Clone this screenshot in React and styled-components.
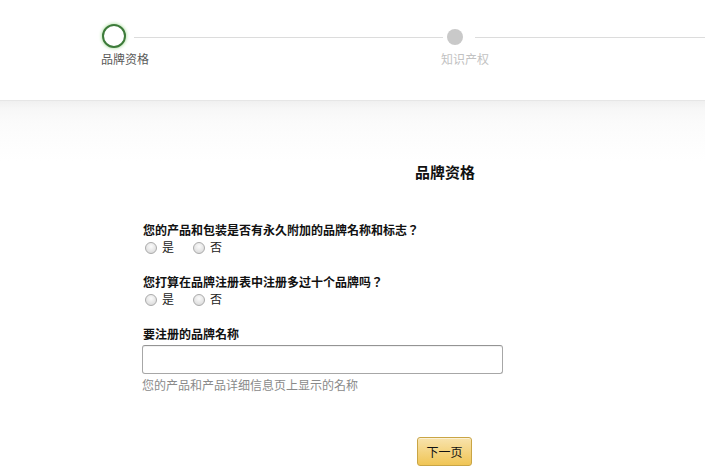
import React from "react";
import styled, { createGlobalStyle } from "styled-components";

const Global = createGlobalStyle`
  html, body { margin: 0; padding: 0; background: #fff; }
  body {
    font-family: "Liberation Sans", Arial, "Noto Sans CJK TC", "Noto Sans CJK SC", sans-serif;
    color: #111;
  }
  * { box-sizing: border-box; }
`;

const Page = styled.div`
  width: 705px;
  height: 469px;
  overflow: hidden;
  background: #fff;
`;

const Header = styled.header`
  height: 101px;
  background: #fff;
  border-bottom: 1px solid #e6e6e6;
  padding-top: 24px;
`;

const Track = styled.div`
  display: flex;
  align-items: center;
  height: 24px;
  margin-left: 102px;
`;

const ActiveStep = styled.span`
  width: 24px;
  height: 24px;
  flex: none;
  border-radius: 50%;
  border: 2px solid #3d7b3a;
  background: #fff;
  box-shadow: 0 0 3px 1px #c4e8bb;
`;

const IdleStep = styled.span`
  width: 16px;
  height: 16px;
  flex: none;
  border-radius: 50%;
  background: #c9c9c9;
  margin-top: 2px;
`;

const Line = styled.span`
  height: 1px;
  background: #dcdcdc;
  margin-top: 2px;
  ${(p) => (p.$w ? `width: ${p.$w}px; flex: none;` : `flex: 1;`)}
  margin-left: ${(p) => p.$ml || 0}px;
  margin-right: ${(p) => p.$mr || 0}px;
`;

const Labels = styled.div`
  display: flex;
  margin-left: 101px;
  margin-top: 4px;
`;

const StepLabel = styled.span`
  font-size: 12px;
  line-height: 16px;
  color: ${(p) => (p.$idle ? "#c2c2c2" : "#5a5a5a")};
  width: ${(p) => (p.$w ? `${p.$w}px` : "auto")};
`;

const Main = styled.main`
  height: 368px;
  background: linear-gradient(#f0f0f0 0px, #f7f7f7 8px, #fbfbfb 22px, #fdfdfd 40px, #ffffff 60px);
  padding-top: 63px;
`;

const Form = styled.form`
  margin-left: 142px;
  width: 361px;
  display: flex;
  flex-direction: column;
`;

const Title = styled.h2`
  margin: 0 0 0 273px;
  font-size: 15px;
  line-height: 18px;
  font-weight: bold;
  color: #111;
  white-space: nowrap;
`;

const Question = styled.div`
  margin-top: ${(p) => p.$mt}px;
  padding-left: 1px;
  font-size: 12px;
  line-height: 16px;
  font-weight: bold;
  color: #111;
  white-space: nowrap;
`;

const Options = styled.div`
  display: flex;
  align-items: center;
  height: 16px;
  margin-top: 1px;
  padding-left: 3px;
  gap: 19px;
`;

const Option = styled.label`
  display: flex;
  align-items: center;
  gap: 5px;
  font-size: 12px;
  line-height: 16px;
  color: #222;
`;

const Radio = styled.span`
  width: 12px;
  height: 12px;
  border-radius: 50%;
  border: 1px solid #ababab;
  background: radial-gradient(circle at 50% 35%, #fbfbfb 0%, #e4e4e4 60%, #d2d2d2 100%);
`;

const Input = styled.input`
  margin-top: 2px;
  width: 361px;
  height: 29px;
  border: 1px solid #a7a7a7;
  border-top-color: #949494;
  border-radius: 3px;
  background: #fff;
  box-shadow: inset 0 1px 0 rgba(0, 0, 0, 0.05);
  outline: none;
`;

const Help = styled.div`
  margin-top: 4px;
  font-size: 12px;
  line-height: 16px;
  color: #8a8a8a;
`;

const NextButton = styled.button`
  margin: 43px 0 0 275px;
  width: 55px;
  height: 29px;
  border: 1px solid #c9a545;
  border-radius: 3px;
  background: linear-gradient(#f8e3ad, #f0c555);
  box-shadow: inset 0 1px 0 rgba(255, 255, 255, 0.5);
  font-family: inherit;
  font-size: 12px;
  color: #111;
  padding: 0;
`;

function RadioPair() {
  return (
    <Options>
      <Option>
        <Radio />是
      </Option>
      <Option>
        <Radio />否
      </Option>
    </Options>
  );
}

export default function App() {
  return (
    <Page>
      <Global />
      <Header>
        <Track>
          <ActiveStep />
          <Line $w={309} $ml={8} $mr={4} />
          <IdleStep />
          <Line $ml={12} />
        </Track>
        <Labels>
          <StepLabel $w={340}>品牌资格</StepLabel>
          <StepLabel $idle>知识产权</StepLabel>
        </Labels>
      </Header>
      <Main>
        <Form onSubmit={(e) => e.preventDefault()}>
          <Title>品牌资格</Title>
          <Question $mt={41}>您的产品和包装是否有永久附加的品牌名称和标志？</Question>
          <RadioPair />
          <Question $mt={19}>您打算在品牌注册表中注册多过十个品牌吗？</Question>
          <RadioPair />
          <Question $mt={19}>要注册的品牌名称</Question>
          <Input type="text" />
          <Help>您的产品和产品详细信息页上显示的名称</Help>
          <NextButton type="button">下一页</NextButton>
        </Form>
      </Main>
    </Page>
  );
}
